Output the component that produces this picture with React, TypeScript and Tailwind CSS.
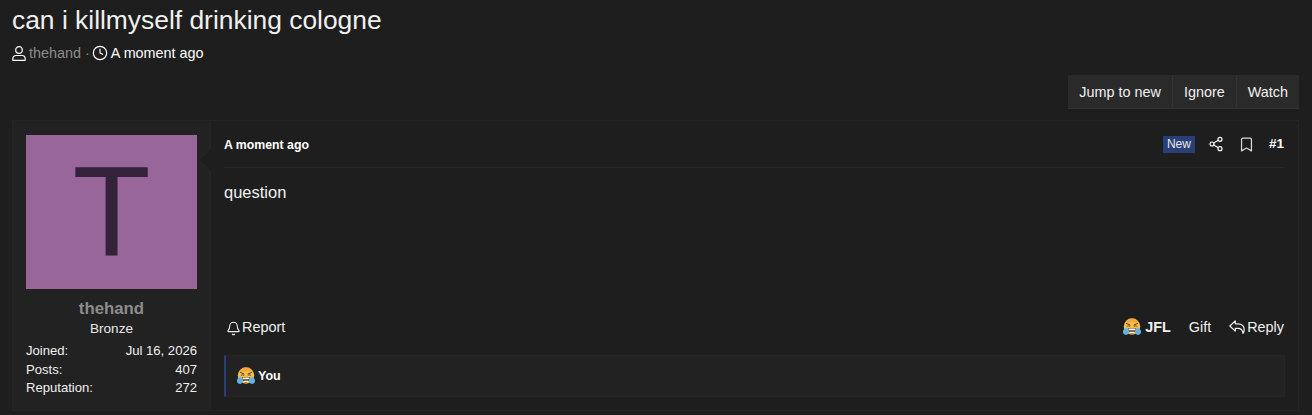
import { Bell, Bookmark, Clock, Share2 } from "lucide-react";

function CryEmoji({ size }: { size: number }) {
  return (
    <svg width={size} height={size} viewBox="0 0 36 36" className="shrink-0">
      <circle cx="18" cy="17" r="16.5" fill="#f7c24a" />
      <path d="M4 11c3-6 8-10 14-10s11 4 14 10c-8-3-20-3-28 0z" fill="#f08a3c" opacity="0.45" />
      <path d="M7 11l7 3M29 11l-7 3" stroke="#5b3a1a" strokeWidth="2" strokeLinecap="round" />
      <path d="M8 17c2-2 4-2 6 0M22 17c2-2 4-2 6 0" stroke="#5b3a1a" strokeWidth="2" fill="none" strokeLinecap="round" />
      <path d="M10 20h16c1 6-3 11-8 11s-9-5-8-11z" fill="#5b3a1a" />
      <path d="M11 21h14v3.5H11zM13 27.5h10v2.5H13z" fill="#fff" />
      <path d="M0.5 25c2-5 8-6 10-3s1 12-4 12-8-5-6-9zM35.5 25c-2-5-8-6-10-3s-1 12 4 12 8-5 6-9z" fill="#62b1ec" />
    </svg>
  );
}

function UserIcon() {
  return (
    <svg width="14" height="15" viewBox="0 0 14 15" fill="none" stroke="currentColor" strokeWidth="1.2" className="shrink-0">
      <circle cx="7" cy="4" r="3.3" />
      <path d="M0.8 14.3v-1.6a3.2 3.2 0 0 1 3.2-3.2h6a3.2 3.2 0 0 1 3.2 3.2v1.6z" strokeLinejoin="round" />
    </svg>
  );
}

function ReplyIcon() {
  return (
    <svg width="16" height="14" viewBox="0 0 16 14" fill="none" stroke="currentColor" strokeWidth="1.2" strokeLinejoin="round" className="shrink-0">
      <path d="M0.8 6 L6.3 0.9 V3.8 H9 C13 3.8 15.2 6.3 15.2 9.5 C15.2 11 14.7 12.3 14 13.3 C13.6 10.8 12 8.4 9 8.4 H6.3 V11.1 Z" />
    </svg>
  );
}

export default function App() {
  return (
    <div className="min-h-[415px] overflow-hidden bg-[#1e1e1e] pr-[13px] pl-3 text-white font-['Liberation_Sans',Arial,sans-serif]">
      <h1 className="pt-[3px] text-[26.4px] leading-[34px] font-normal text-[#f0f0f0]">can i killmyself drinking cologne</h1>
      <div className="mt-[8px] flex h-[16px] items-center text-[14.4px] leading-none">
        <UserIcon />
        <span className="ml-[3px] text-[#8c8c8c]">thehand</span>
        <span className="ml-[4px] text-[#8c8c8c]">·</span>
        <Clock size={16} strokeWidth={1.75} className="ml-[2px]" />
        <span className="ml-[3px]">A moment ago</span>
      </div>

      <div className="mt-[14px] flex justify-end">
        <div className="flex h-[34px] border-b border-[#333] bg-[#2a2a2a] text-[14.4px] leading-[34px] text-[#f0f0f0]">
          <div className="border-r border-[#333] px-[11px]">Jump to new</div>
          <div className="border-r border-[#333] px-[11px]">Ignore</div>
          <div className="px-[11px]">Watch</div>
        </div>
      </div>

      <div className="mt-[11px] flex h-[291px] border border-[#252525]">
        <aside className="relative flex w-[198px] shrink-0 flex-col border-r border-[#252525] bg-[#222222] px-[13px] pt-[14px]">
          <div className="flex h-[154px] items-center justify-center bg-[#996699] pb-[2px] text-[128px] leading-none text-[#33223a]">T</div>
          <div className="mt-[10px] text-center text-[16.8px] leading-[20px] font-bold text-[#8c8c8c]">thehand</div>
          <div className="mt-[1px] text-center text-[13.6px] leading-[18px] text-[#e8e8e8]">Bronze</div>
          <div className="mt-[4px] text-[13.1px] leading-[18.5px] text-[#f0f0f0]">
            <div className="flex justify-between"><span>Joined:</span><span>Jul 16, 2026</span></div>
            <div className="flex justify-between"><span>Posts:</span><span>407</span></div>
            <div className="flex justify-between"><span>Reputation:</span><span>272</span></div>
          </div>
          <div className="absolute top-[26px] right-[-1px] h-0 w-0 border-y-[13px] border-r-[13px] border-y-transparent border-r-[#262626]" />
          <div className="absolute top-[27px] right-[-1px] h-0 w-0 border-y-[12px] border-r-[12px] border-y-transparent border-r-[#1e1e1e]" />
        </aside>

        <main className="flex min-w-0 flex-1 flex-col px-[13px]">
          <header className="flex h-[47px] items-center border-b border-[#262626]">
            <span className="mt-[2px] text-[12.3px] font-bold">A moment ago</span>
            <div className="mr-[1px] ml-auto flex items-center text-[13.5px]">
              <span className="bg-[#2a3f78] px-[4px] text-[12px] leading-[17px] text-[#e8e8e8]">New</span>
              <Share2 size={16} strokeWidth={1.75} className="ml-[13px]" />
              <Bookmark size={17} strokeWidth={1.75} className="ml-[14px] text-[#d8d8d8]" />
              <span className="ml-[14px] font-bold">#1</span>
            </div>
          </header>
          <div className="pt-[14px] text-[16.5px] leading-[20px] text-[#f0f0f0]">question</div>
          <div className="mt-auto">
            <div className="flex h-[22px] items-center text-[14.4px] text-[#f0f0f0]">
              <Bell size={15} strokeWidth={1.75} className="ml-[2px]" />
              <span className="ml-[1px]">Report</span>
              <div className="mr-[1px] ml-auto flex items-center">
                <span className="-translate-y-[1px]"><CryEmoji size={18} /></span>
                <span className="ml-[4px] font-bold">JFL</span>
                <span className="ml-[18px]">Gift</span>
                <span className="ml-[18px] -translate-y-[1px]"><ReplyIcon /></span>
                <span className="ml-[2px]">Reply</span>
              </div>
            </div>
            <div className="mt-[16px] mb-[13px] flex h-[42px] items-center border border-l-[2px] border-[#262626] border-l-[#2a3f78] bg-[#222222] pl-[11px] text-[12.5px] font-bold">
              <CryEmoji size={18} />
              <span className="ml-[3px]">You</span>
            </div>
          </div>
        </main>
      </div>
    </div>
  );
}
